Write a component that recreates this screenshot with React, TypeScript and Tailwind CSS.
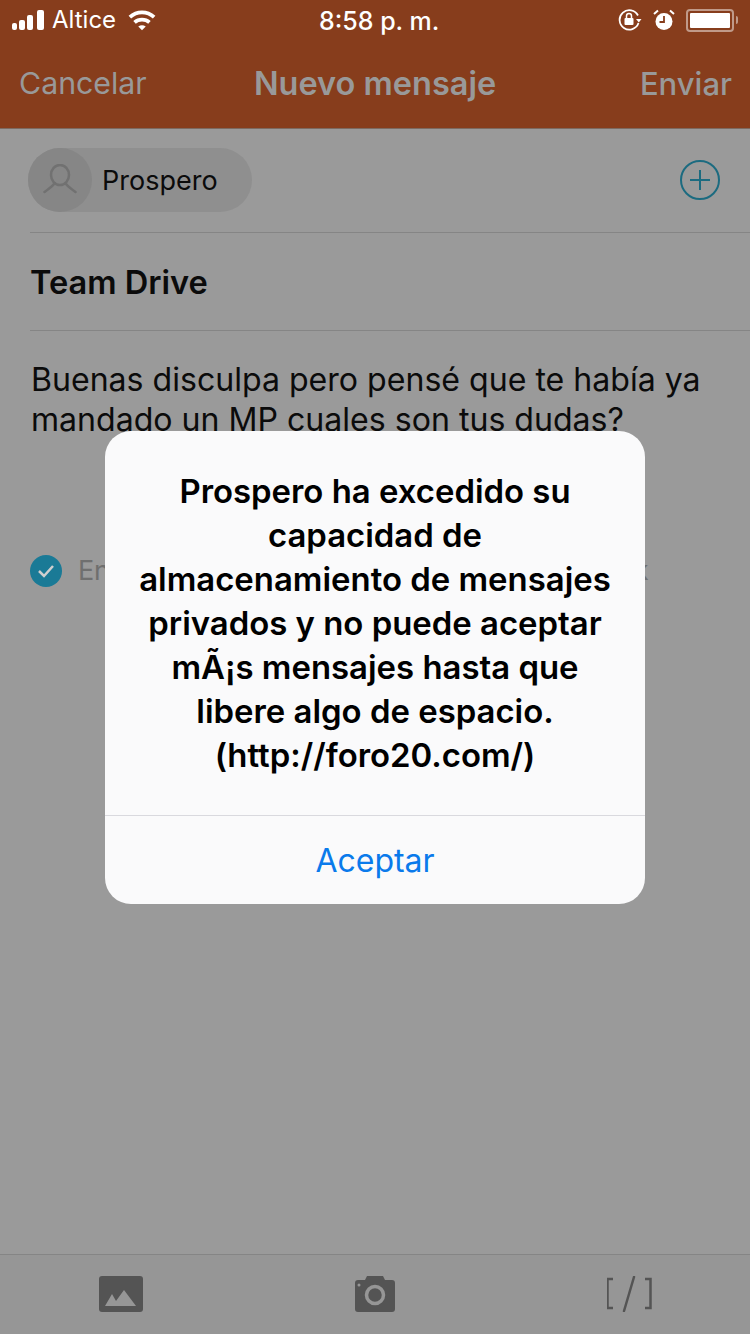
const font = { fontFamily: 'Inter, "Noto Sans", "Liberation Sans", sans-serif' };

function StatusBar() {
  return (
    <div className="relative flex h-10 items-center justify-between pl-3 pr-[12px] text-white">
      <div className="flex items-center">
        <svg width="33" height="20" viewBox="0 0 33 20" fill="#fff">
          <rect x="0" y="13" width="5" height="7" rx="2" />
          <rect x="7" y="10" width="6" height="10" rx="2" />
          <rect x="15" y="5" width="6" height="15" rx="2" />
          <rect x="25" y="0" width="7" height="20" rx="2" />
        </svg>
        <span className="ml-[7px] text-[24px]">Altice</span>
        <svg className="ml-[12px]" width="28" height="21" viewBox="0 0 30 22" fill="none" stroke="#fff" strokeWidth="4">
          <path d="M2 7.5C9.5 .5 20.5 .5 28 7.5" />
          <path d="M7 13C11.5 9 18.5 9 23 13" />
          <path d="M11 17.5L15 21.5L19 17.5C16.5 15.6 13.500 15.6 11 17.5Z" fill="#fff" stroke="none" />
        </svg>
      </div>
      <span className="absolute left-[319px] top-[5px] text-[25px] font-medium leading-[32px]">8:58 p. m.</span>
      <div className="flex items-center">
        <svg width="24" height="22" viewBox="0 0 24 22" fill="none" stroke="#fff" strokeWidth="1.8">
          <path d="M20 6.5A9.700 9.700 0 1 0 20.500 14" />
          <path d="M18 10h5.500l-2.700 3.500z" fill="#fff" stroke="none" />
          <rect x="6.500" y="9" width="9" height="7" rx="1" fill="#fff" stroke="none" />
          <path d="M8.500 9V7a2.500 2.500 0 0 1 5 0v2" strokeWidth="1.500" />
        </svg>
        <svg className="ml-[11px]" width="22" height="22" viewBox="0 0 22 22">
          <circle cx="11" cy="12.500" r="8.500" fill="#fff" />
          <path d="M11 7v6H6.500" fill="none" stroke="#873d1c" strokeWidth="1.800" />
          <path d="M1 5l4-3.500M21 5l-4-3.500" stroke="#fff" strokeWidth="2" />
        </svg>
        <div className="ml-[11px] flex h-[23px] w-[48px] items-center rounded-[4px] border-2 border-[#c09a89] p-[2px]">
          <div className="h-full w-full rounded-[1px] bg-white" />
        </div>
        <div className="ml-[2px] h-[8px] w-[2px] rounded-r-sm bg-[#c09a89]" />
      </div>
    </div>
  );
}

function NavBar() {
  return (
    <div className="relative flex h-[89px] items-center justify-between border-b border-[#7d6a60] pl-[19px] pr-[18px] text-[#999999]">
      <span className="text-[30.300px]">Cancelar</span>
      <span className="absolute left-0 right-0 top-[25px] text-center text-[32.500px] font-semibold leading-[38px]">Nuevo mensaje</span>
      <span className="text-[31px] font-medium">Enviar</span>
    </div>
  );
}

function Recipient() {
  return (
    <div className="ml-[30px] flex h-[104px] items-center justify-between border-b border-[#858585] pb-[2px] pr-[30px]">
      <div className="-ml-[2px] flex h-[64px] w-[224px] items-center rounded-full bg-[#8f8f8f]">
        <div className="flex h-[64px] w-[64px] items-center justify-center rounded-full bg-[#868686]">
          <svg width="34" height="32" viewBox="0 0 34 32" fill="none" stroke="#717171" strokeWidth="2.500" strokeLinecap="round">
            <ellipse cx="17" cy="11" rx="9" ry="10" />
            <path d="M11.500 19.500C9 23 5 25 1.500 28M22.500 19.500C25 23 29 25 32.500 28" />
          </svg>
        </div>
        <span className="ml-[10px] pt-[4px] text-[27px] text-[#0b0b0b]">Prospero</span>
      </div>
      <svg width="40" height="40" viewBox="0 0 40 40" fill="none" stroke="#1c6b80" strokeWidth="2">
        <circle cx="20" cy="20" r="19" />
        <path d="M10 20h20M20 10v20" />
      </svg>
    </div>
  );
}

function Toolbar() {
  return (
    <div className="flex h-[80px] items-start justify-between border-t border-[#858585] bg-[#969696] pl-[99px] pr-[97px] pt-[21px]">
      <svg width="44" height="36" viewBox="0 0 44 36">
        <rect width="44" height="36" rx="3" fill="#545454" />
        <path d="M6 30L13 18L17 25L25 14L37 30Z" fill="#969696" />
      </svg>
      <svg width="40" height="36" viewBox="0 0 40 36">
        <path d="M3 4h7l2-4h16l2 4h7a3 3 0 0 1 3 3v26a3 3 0 0 1-3 3H3a3 3 0 0 1-3-3V7a3 3 0 0 1 3-3z" fill="#545454" />
        <ellipse cx="20" cy="19" rx="8.500" ry="8.500" fill="none" stroke="#969696" strokeWidth="3.500" />
        <circle cx="4" cy="9" r="1.500" fill="#969696" />
      </svg>
      <svg width="46" height="36" viewBox="1 0 46 36" fill="none" stroke="#545454" strokeWidth="2.500">
        <path d="M7 3H1.500v29H7M39 3h5.500v29H39" />
        <path d="M28 1L18 35" strokeLinecap="round" />
      </svg>
    </div>
  );
}

function Alert() {
  return (
    <div className="absolute left-[105px] top-[431px] w-[540px] rounded-[26px] bg-[#fafafb]">
      <p className="h-[384px] px-[20px] pt-[38px] text-center text-[32.900px] font-semibold leading-[44px] text-black">
        Prospero ha excedido su
        <br />
        capacidad de
        <br />
        almacenamiento de mensajes
        <br />
        privados y no puede aceptar
        <br />
        mÃ¡s mensajes hasta que
        <br />
        libere algo de espacio.
        <br />
        (http://foro20.com/)
      </p>
      <div className="flex h-[89px] items-center justify-center border-t border-[#d9d9de] pt-[2px] text-[32px] text-[#0a7aeb]">
        Aceptar
      </div>
    </div>
  );
}

export default function App() {
  return (
    <div className="relative flex h-[1334px] w-[750px] flex-col overflow-hidden bg-[#9a9a9a]" style={font}>
      <div className="bg-[#873d1c]">
        <StatusBar />
        <NavBar />
      </div>
      <div className="flex-1">
        <Recipient />
        <div className="ml-[30px] flex h-[98px] items-center border-b border-[#858585] pt-[2px] text-[32.600px] font-semibold text-[#0b0b0b]">
          Team Drive
        </div>
        <p className="ml-[31px] mt-[29px] w-[700px] text-[32.100px] leading-[40px] text-[#0b0b0b]">
          Buenas disculpa pero pensé que te había ya mandado un MP cuales son tus dudas?
        </p>
        <div className="ml-[30px] mt-[111px] flex items-center">
          <div className="flex h-[32px] w-[32px] items-center justify-center rounded-full bg-[#1a7a96]">
            <svg width="20" height="16" viewBox="0 0 20 16" fill="none" stroke="#cfcfcf" strokeWidth="2.500">
              <path d="M3 8l5 5 9-10" />
            </svg>
          </div>
          <span className="ml-[16px] whitespace-nowrap text-[27px] tracking-[-0.35px] text-[#6f6f6f]">Enviar también esta conversación a Facebook</span>
        </div>
      </div>
      <Toolbar />
      <Alert />
    </div>
  );
}
